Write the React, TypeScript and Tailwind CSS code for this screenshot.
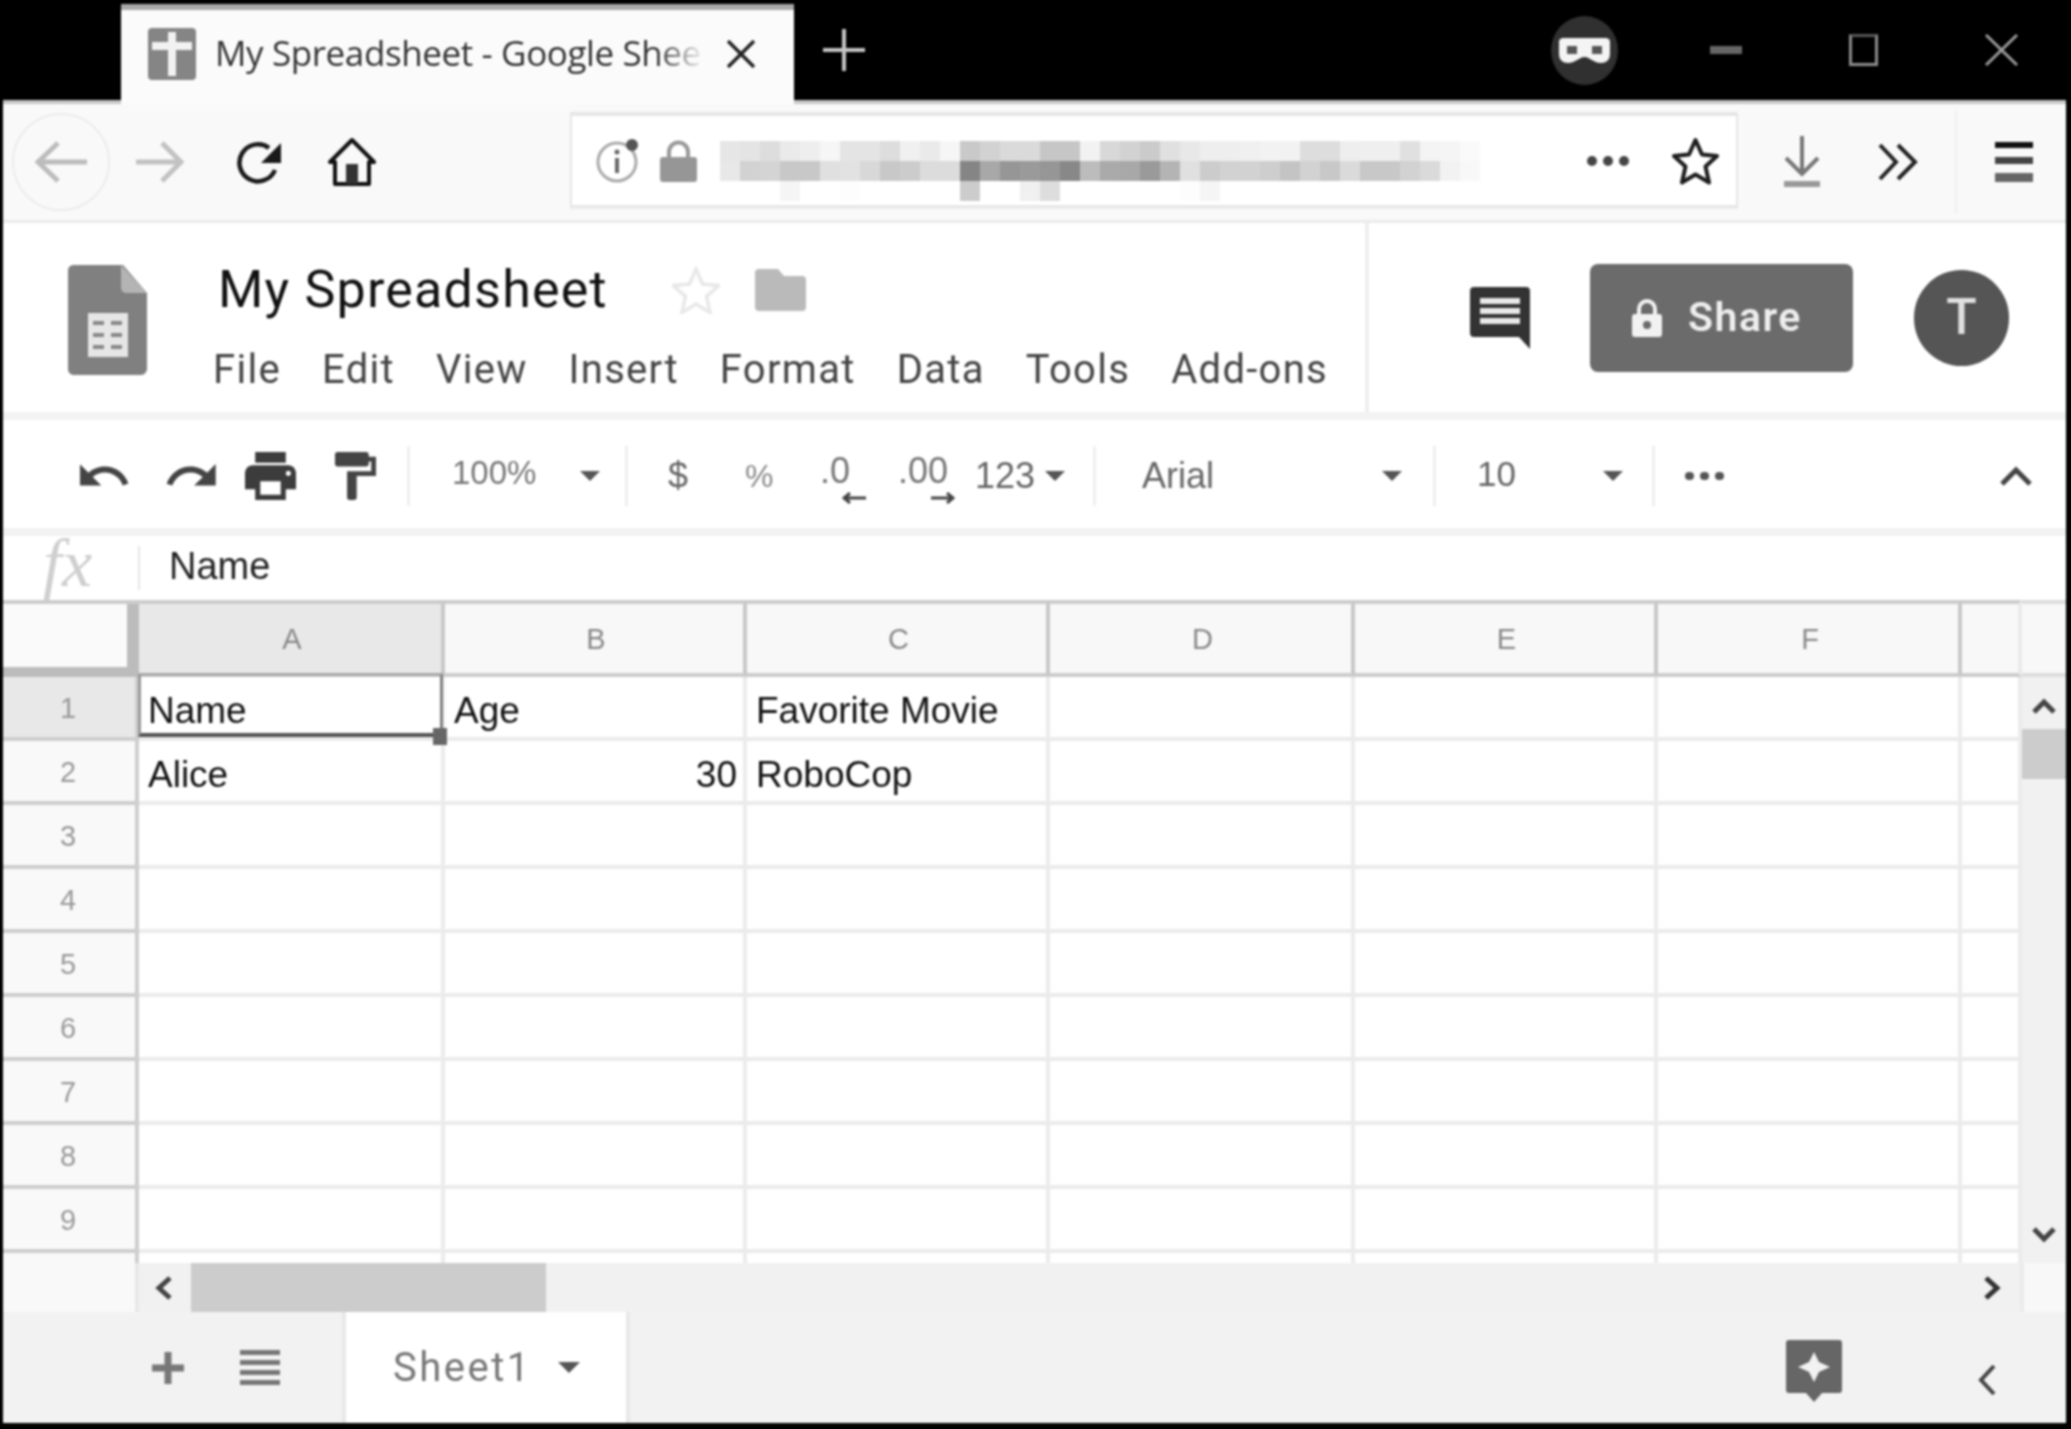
import React from 'react';

const ROW1 = ['e6','e4','dd','ea','ee','f6','e4','e4','dd','f0','ea','f6','c9','d2','da','da','c6','c6','f2','d8','d2','cb','e0','e8','ee','ee','f0','f2','f2','dd','dd','ee','ef','ef','e0','f4','f5','fa'];
const ROW2 = ['e8','d2','d4','c8','c8','e0','e2','d8','c8','cc','dc','dc','85','a8','96','9a','96','88','bc','aa','a8','9a','b4','e0','cc','d2','d2','ce','c4','d2','c8','da','c8','c8','d2','da','f2','f8'];
const ROW3 = ['ff','ff','ff','f5','ff','ff','fd','ff','ff','ff','ff','ff','cc','ff','ff','f0','dd','ff','ff','ff','ff','ff','ff','fd','f5','ff','ff','ff','ff','ff','ff','ff','ff','ff','ff','ff','ff','ff'];

const COLUMNS = ['A', 'B', 'C', 'D', 'E', 'F', ''];
const ROWS = [1, 2, 3, 4, 5, 6, 7, 8, 9, 10];
const CELLS: Record<string, string> = { A1: 'Name', B1: 'Age', C1: 'Favorite Movie', A2: 'Alice', B2: '30', C2: 'RoboCop' };
const MENU = ['File', 'Edit', 'View', 'Insert', 'Format', 'Data', 'Tools', 'Add-ons'];

function Tri({ className }: { className: string }) {
  return (
    <svg viewBox="0 0 20 10" className={className}>
      <path d="M0 0h20L10 10z" fill="#555" />
    </svg>
  );
}

function Sep({ className }: { className: string }) {
  return <div className={`w-[3px] h-[60px] shrink-0 bg-[#efefef] ${className}`} />;
}

function TitleBar() {
  return (
    <div className="flex items-center h-[104px] shrink-0 border-b-4 border-[#c6c6c6] bg-black">
      <div className="flex items-center ml-[118px] w-[673px] h-[100px] mt-[4px] -mb-[4px] self-start bg-[#fbfbfb] border-t-[6px] border-[#a8a8a8]">
        <svg viewBox="0 0 48 52" className="ml-[27px] w-[48px] h-[52px] mb-[6px] shrink-0">
          <rect width="48" height="52" rx="4" fill="#858585" />
          <path d="M20 4h8v10h16v8H28v26h-8V22H4v-8h16z" fill="#f2f2f2" />
        </svg>
        <div className="relative ml-[19px] w-[490px] h-[46px] -mt-[2px] mb-[6px]">
          <div className="whitespace-nowrap text-[35px] leading-[46px] tracking-[-0.4px] text-[#333] font-['Open_Sans',sans-serif]">My Spreadsheet - Google Shee</div>
          <div className="absolute top-0 right-0 w-[50px] h-full bg-gradient-to-r from-transparent to-[#fbfbfb]" />
        </div>
        <svg viewBox="0 0 28 28" className="ml-[22px] w-[28px] h-[28px] mb-[6px] shrink-0">
          <path d="M1 1l26 26M27 1L1 27" stroke="#222" strokeWidth="3.5" />
        </svg>
      </div>
      <svg viewBox="0 0 42 42" className="ml-[29px] w-[42px] h-[42px] shrink-0">
        <path d="M21 0v42M0 21h42" stroke="#c4c4c4" strokeWidth="4" />
      </svg>
      <svg viewBox="0 0 67 69" className="ml-[686px] w-[67px] h-[69px] shrink-0">
        <ellipse cx="33.500" cy="34.500" rx="33.500" ry="34.500" fill="#303030" />
        <path d="M8 26c0-3 2-4 5-4h41c3 0 5 1 5 4v12c0 6-4 9-9 9-8 0-11-6-16.500-6S25 47 17 47c-5 0-9-3-9-9z" fill="#f4f4f4" />
        <rect x="16" y="30" width="10" height="8" fill="#555" />
        <rect x="41" y="30" width="10" height="8" fill="#555" />
      </svg>
      <div className="ml-[92px] w-[32px] h-[8px] bg-[#666] shrink-0" />
      <div className="ml-[107px] w-[29px] h-[32px] border-[3px] border-[#8c8c8c] border-t-[#555] shrink-0" />
      <svg viewBox="0 0 33 32" className="ml-[107px] w-[33px] h-[32px] shrink-0">
        <path d="M1 1l31 30M32 1L1 31" stroke="#9a9a9a" strokeWidth="3" />
      </svg>
    </div>
  );
}

function NavBar() {
  return (
    <div className="flex items-center h-[119px] shrink-0 bg-[#f9f9f9] border-b-[3px] border-[#ebebeb]">
      <div className="flex items-center justify-center ml-[9px] w-[98px] h-[98px] rounded-full border-2 border-[#ececec] shrink-0">
        <svg viewBox="0 0 52 42" className="w-[52px] h-[42px]">
          <path d="M52 21H3M23 2L3 21l20 19" fill="none" stroke="#bcbcbc" strokeWidth="5" />
        </svg>
      </div>
      <svg viewBox="0 0 48 42" className="ml-[26px] w-[48px] h-[42px] shrink-0">
        <path d="M0 21h45M26 2l19 19-19 19" fill="none" stroke="#c2c2c2" strokeWidth="5" />
      </svg>
      <svg viewBox="0 0 48 44" className="ml-[51px] w-[48px] h-[44px] shrink-0">
        <path d="M40 30A18.500 18.500 0 1 1 34 8" fill="none" stroke="#1a1a1a" strokeWidth="4.500" />
        <path d="M46 3v20H26z" fill="#1a1a1a" />
      </svg>
      <svg viewBox="0 0 48 50" className="ml-[45px] w-[48px] h-[50px] shrink-0">
        <path d="M2 25L24 3l22 22h-5v22H7V25z" fill="none" stroke="#111" strokeWidth="4" strokeLinejoin="round" />
        <path d="M18 47V27h12v20z" fill="#333" />
      </svg>
      <div className="flex items-center ml-[194px] -mt-[5px] w-[1168px] h-[95px] bg-white border-2 border-[#e6e6e6] border-t-4 shadow-[0_2px_1px_#ececec] shrink-0">
        <div className="relative ml-[23px] w-[45px] h-[45px] shrink-0">
          <svg viewBox="0 0 45 45" className="w-full h-full">
            <circle cx="22" cy="24" r="19" fill="none" stroke="#aaa" strokeWidth="3" />
            <path d="M22 20v15" stroke="#666" strokeWidth="4" />
            <circle cx="22" cy="14" r="2.500" fill="#666" />
            <circle cx="37" cy="7" r="6" fill="#555" />
          </svg>
        </div>
        <svg viewBox="0 0 37 42" className="ml-[20px] w-[37px] h-[42px] shrink-0">
          <path d="M9 18v-6a9.500 9.500 0 0 1 19 0v6" fill="none" stroke="#999" strokeWidth="4" />
          <rect y="17" width="37" height="25" rx="3" fill="#969696" />
        </svg>
        <div className="flex flex-col ml-[23px] mt-[20px] w-[760px] shrink-0">
          {[ROW1, ROW2, ROW3].map((row, i) => (
            <div key={i} className="flex h-[20px]">
              {row.map((shade, j) => (
                <div key={j} className="w-[20px] h-[20px]" style={{ backgroundColor: `#${shade}${shade}${shade}` }} />
              ))}
            </div>
          ))}
        </div>
        <div className="flex gap-[6px] ml-[107px] shrink-0">
          <div className="w-[10px] h-[10px] rounded-full bg-[#444]" />
          <div className="w-[10px] h-[10px] rounded-full bg-[#444]" />
          <div className="w-[10px] h-[10px] rounded-full bg-[#444]" />
        </div>
        <svg viewBox="0 0 47 48" className="ml-[43px] w-[47px] h-[48px] shrink-0">
          <path d="M23.500 3l6.500 14.500 15 1.500-11.500 10.500 3.500 16-13.500-8-13.500 8 3.500-16L2 19l15-1.500z" fill="none" stroke="#1d1d1d" strokeWidth="4" strokeLinejoin="round" />
        </svg>
      </div>
      <svg viewBox="0 0 40 52" className="ml-[44px] w-[40px] h-[52px] shrink-0">
        <path d="M20 0v36M4 22l16 16 16-16" fill="none" stroke="#777" strokeWidth="4" />
        <rect x="2" y="45" width="36" height="6" fill="#999" />
      </svg>
      <svg viewBox="0 0 42 38" className="ml-[55px] w-[42px] h-[38px] shrink-0">
        <path d="M3 2l16 17L3 36M21 2l17 17-17 17" fill="none" stroke="#222" strokeWidth="4" />
      </svg>
      <div className="ml-[36px] w-[2px] h-[102px] bg-[#efefef] shrink-0" />
      <div className="flex flex-col gap-[9px] ml-[38px] w-[38px] shrink-0">
        <div className="h-[6px] bg-[#111]" />
        <div className="h-[7px] bg-[#444]" />
        <div className="h-[9px] bg-[#666]" />
      </div>
    </div>
  );
}

function DocHeader() {
  return (
    <div className="flex h-[197px] shrink-0 bg-white border-b-8 border-[#f3f3f3]">
      <div className="flex w-[1362px] shrink-0">
        <svg viewBox="0 0 79 110" className="ml-[65px] mt-[42px] w-[79px] h-[110px] shrink-0">
          <path d="M5 0h50l24 28v76a6 6 0 0 1-6 6H5a6 6 0 0 1-5-6V6a6 6 0 0 1 5-6z" fill="#808080" />
          <path d="M53 0l26 28H58a5 5 0 0 1-5-5z" fill="#b4b4b4" />
          <rect x="20" y="48" width="40" height="44" fill="#e6e6e6" />
          <path d="M25 56h11v4H25zm18 0h11v4H43zM25 68h11v4H25zm18 0h11v4H43zM25 80h11v4H25zm18 0h11v4H43z" fill="#888" />
        </svg>
        <div className="flex flex-col ml-[66px]">
          <div className="flex items-center mt-[37px] h-[60px]">
            <div className="ml-[5px] w-[454px] text-[52px] leading-[60px] tracking-[1.2px] text-[#111] whitespace-nowrap font-['Roboto',sans-serif]">My Spreadsheet</div>
            <svg viewBox="0 0 48 48" className="w-[48px] h-[48px] shrink-0">
              <path d="M24 3l6.500 15 16.500 1.500-12.500 11 3.500 16-14-8.500-14 8.500 3.500-16L1 19.500 17.500 18z" fill="none" stroke="#e8e8e8" strokeWidth="3.500" />
            </svg>
            <svg viewBox="0 0 51 42" className="ml-[35px] w-[51px] h-[42px] shrink-0">
              <path d="M4 0h19l6 7h18a4 4 0 0 1 4 4v27a4 4 0 0 1-4 4H4a4 4 0 0 1-4-4V4a4 4 0 0 1 4-4z" fill="#bababa" />
            </svg>
          </div>
          <div className="flex items-center gap-[41px] mt-[25px] h-[50px] text-[40px] leading-[50px] tracking-[1.3px] text-[#444] whitespace-nowrap font-['Roboto',sans-serif]">
            {MENU.map((item) => (
              <span key={item}>{item}</span>
            ))}
          </div>
        </div>
      </div>
      <div className="flex items-center flex-1 border-l-4 border-[#efefef]">
        <svg viewBox="0 0 60 62" className="ml-[101px] w-[60px] h-[62px] shrink-0">
          <path d="M0 4a4 4 0 0 1 4-4h52a4 4 0 0 1 4 4v58L49 50H4a4 4 0 0 1-4-4z" fill="#333" />
          <path d="M10 11h40v6H10zm0 10h40v6H10zm0 10h40v6H10z" fill="#e8e8e8" />
        </svg>
        <div className="flex items-center ml-[60px] w-[263px] h-[108px] rounded-lg bg-[#6b6b6b] shrink-0">
          <svg viewBox="0 0 30 38" className="ml-[42px] w-[30px] h-[38px] shrink-0">
            <path d="M7 16v-6a8 8 0 0 1 16 0v6" fill="none" stroke="#f2f2f2" strokeWidth="4" />
            <rect y="15" width="30" height="23" rx="3" fill="#f2f2f2" />
            <circle cx="15" cy="26" r="4" fill="#6b6b6b" />
          </svg>
          <span className="ml-[26px] text-[41px] leading-none font-semibold tracking-[1.5px] text-[#eee] font-['Roboto',sans-serif]">Share</span>
        </div>
        <div className="flex items-center justify-center ml-[61px] w-[95px] h-[96px] rounded-full bg-[#555] text-[50px] font-medium text-[#e0e0e0] shrink-0 font-['Roboto',sans-serif]">T</div>
      </div>
    </div>
  );
}

function FormatBar() {
  return (
    <div className="flex items-center h-[116px] pt-[3px] shrink-0 bg-white border-b-8 border-[#f2f2f2] whitespace-nowrap text-[#666] font-['Liberation_Sans',sans-serif]">
      <svg viewBox="2 7 22 10" className="ml-[77px] w-[52px] h-[24px] shrink-0">
        <path d="M12.500 8c-2.650 0-5.050.99-6.900 2.600L2 7v9h9l-3.620-3.620c1.390-1.160 3.160-1.880 5.120-1.880 3.540 0 6.550 2.310 7.600 5.500l2.370-.78C21.080 11.030 17.150 8 12.500 8z" fill="#444" />
      </svg>
      <svg viewBox="1 7 21 10" className="ml-[33px] w-[51px] h-[24px] shrink-0">
        <path d="M18.400 10.600C16.550 8.990 14.150 8 11.500 8c-4.650 0-8.580 3.030-9.960 7.220L3.900 16c1.050-3.190 4.050-5.500 7.600-5.500 1.950 0 3.730.72 5.120 1.880L13 16h9V7l-3.600 3.600z" fill="#444" />
      </svg>
      <svg viewBox="2 3 20 18" className="ml-[29px] w-[51px] h-[48px] shrink-0" preserveAspectRatio="none">
        <path d="M19 8H5c-1.660 0-3 1.340-3 3v6h4v4h12v-4h4v-6c0-1.660-1.340-3-3-3zm-3 11H8v-5h8v5zm3-7c-.55 0-1-.45-1-1s.45-1 1-1 1 .45 1 1-.45 1-1 1zm-1-9H6v4h12V3z" fill="#3c3c3c" />
      </svg>
      <svg viewBox="4 2 17 20" className="ml-[39px] w-[41px] h-[48px] shrink-0" preserveAspectRatio="none">
        <path d="M18 4V3c0-.55-.45-1-1-1H5c-.55 0-1 .45-1 1v4c0 .55.45 1 1 1h12c.55 0 1-.45 1-1V6h1v4H9v11c0 .55.45 1 1 1h2c.55 0 1-.45 1-1v-9h8V4h-3z" fill="#444" />
      </svg>
      <Sep className="ml-[31px]" />
      <span className="ml-[42px] w-[86px] text-[33px] text-[#777] -mt-[6px] shrink-0">100%</span>
      <Tri className="ml-[42px] w-[20px] h-[10px] shrink-0" />
      <Sep className="ml-[25px]" />
      <span className="ml-[40px] w-[24px] text-[36px] leading-none shrink-0">$</span>
      <span className="ml-[53px] w-[33px] text-[32px] leading-none shrink-0 text-[#888]">%</span>
      <div className="relative ml-[42px] w-[46px] h-[60px] shrink-0">
        <span className="absolute left-0 top-[7px] text-[36px] leading-none text-[#777]">.0</span>
        <svg viewBox="0 0 24 12" className="absolute right-0 bottom-[2px] w-[24px] h-[12px]">
          <path d="M24 6H2M8 1L2 6l6 5" fill="none" stroke="#444" strokeWidth="3" />
        </svg>
      </div>
      <div className="relative ml-[32px] w-[57px] h-[60px] shrink-0">
        <span className="absolute left-0 top-[7px] text-[36px] leading-none text-[#777]">.00</span>
        <svg viewBox="0 0 24 12" className="absolute right-0 bottom-[2px] w-[24px] h-[12px]">
          <path d="M0 6h22M16 1l6 5-6 5" fill="none" stroke="#444" strokeWidth="3" />
        </svg>
      </div>
      <span className="ml-[20px] w-[60px] text-[36px] leading-none shrink-0">123</span>
      <Tri className="ml-[9px] w-[22px] h-[10px] shrink-0" />
      <Sep className="ml-[27px]" />
      <span className="ml-[46px] w-[73px] text-[36px] leading-none shrink-0">Arial</span>
      <Tri className="ml-[167px] w-[20px] h-[10px] shrink-0" />
      <Sep className="ml-[31px]" />
      <span className="ml-[41px] w-[40px] text-[35px] leading-none -mt-[4px] shrink-0">10</span>
      <Tri className="ml-[86px] w-[20px] h-[10px] shrink-0" />
      <Sep className="ml-[29px]" />
      <div className="flex gap-[6px] ml-[30px] w-[40px] shrink-0">
        <div className="w-[9px] h-[8px] rounded-full bg-[#555]" />
        <div className="w-[9px] h-[8px] rounded-full bg-[#555]" />
        <div className="w-[9px] h-[8px] rounded-full bg-[#555]" />
      </div>
      <svg viewBox="0 0 32 20" className="ml-[275px] w-[32px] h-[20px] shrink-0">
        <path d="M2 18L16 4l14 14" fill="none" stroke="#444" strokeWidth="5" />
      </svg>
    </div>
  );
}

function FormulaBar() {
  return (
    <div className="flex items-center h-[64px] shrink-0 bg-white">
      <span className="ml-[40px] w-[95px] text-[68px] leading-none -mt-[10px] italic text-[#cfcfcf] font-['Liberation_Serif',serif]">fx</span>
      <div className="w-[2px] h-[44px] bg-[#e6e6e6]" />
      <span className="ml-[29px] -mt-[4px] text-[38px] leading-none text-[#222] font-['Liberation_Sans',sans-serif]">Name</span>
    </div>
  );
}

function Sheet() {
  return (
    <div className="flex h-[663px] shrink-0 overflow-hidden bg-white font-['Liberation_Sans',sans-serif]">
      <div className="relative w-[2019px] shrink-0">
        <div className="grid grid-cols-[136px_306px_302px_303px_305px_303px_304px_60px] grid-rows-[77px] auto-rows-[64px]">
          <div className="bg-[#f8f8f8] border-t-4 border-[#ccc]">
            <div className="h-full border-r-[12px] border-b-[10px] border-[#bcbcbc] bg-[#fafafa]" />
          </div>
          {COLUMNS.map((col, i) => (
            <div
              key={i}
              className={`flex items-center justify-center pl-[4px] pt-[2px] border-y-4 border-r-4 border-y-[#ccc] text-[29px] text-[#888] ${
                col === 'A' ? 'bg-[#e8e8e8] border-r-[#c8c8c8]' : col === '' ? 'bg-[#f8f8f8] border-r-[#eaeaea]' : 'bg-[#f8f8f8] border-r-[#c8c8c8]'
              }`}
            >
              {col}
            </div>
          ))}
          {ROWS.map((row) => (
            <React.Fragment key={row}>
              <div className={`flex items-center justify-center pt-[3px] pr-[2px] border-b-4 border-r-4 border-[#cecece] text-[29px] text-[#999] ${row === 1 ? 'bg-[#e8e8e8]' : 'bg-[#f9f9f9]'}`}>{row < 10 ? row : ''}</div>
              {COLUMNS.map((col, i) => (
                <div
                  key={i}
                  className={`flex items-center pt-[6px] border-b-4 border-r-4 border-[#ebebeb] text-[37px] leading-none text-[#111] whitespace-nowrap pl-[9px] pr-[6px] ${
                    col === 'B' && row === 2 ? 'justify-end' : ''
                  }`}
                >
                  {CELLS[`${col}${row}`]}
                </div>
              ))}
            </React.Fragment>
          ))}
        </div>
        <div className="absolute left-[135px] top-[73px] w-[305px] h-[64px] border-[3px] border-t-[#aaa] border-l-[#999] border-r-[#808080] border-b-4 border-b-[#555]" />
        <div className="absolute left-[430px] top-[128px] w-[14px] h-[17px] bg-[#666]" />
      </div>
      <div className="flex flex-col items-center w-[44px] shrink-0 bg-[#f1f1f1] relative">
        <div className="w-full h-[77px] bg-[#f8f8f8] border-y-4 border-y-[#ddd]" />
        <svg viewBox="0 0 24 18" className="mt-[20px] w-[24px] h-[18px] shrink-0">
          <path d="M2 15L12 5l10 10" fill="none" stroke="#444" strokeWidth="5" />
        </svg>
        <div className="mt-[14px] w-full h-[50px] bg-[#cccccc] shrink-0" />
        <svg viewBox="0 0 24 18" className="mt-[447px] w-[24px] h-[18px] shrink-0">
          <path d="M2 3l10 10L22 3" fill="none" stroke="#444" strokeWidth="5" />
        </svg>
      </div>
    </div>
  );
}

function HScroll() {
  return (
    <div className="flex h-[49px] shrink-0 bg-[#f1f1f1]">
      <div className="w-[136px] bg-[#f9f9f9] border-r-4 border-[#e8e8e8] shrink-0" />
      <div className="flex items-center w-[52px] shrink-0">
        <svg viewBox="0 0 18 24" className="ml-[16px] w-[18px] h-[24px]">
          <path d="M15 2L4 12l11 10" fill="none" stroke="#444" strokeWidth="5" />
        </svg>
      </div>
      <div className="w-[355px] bg-[#cccccc] shrink-0" />
      <div className="flex items-center flex-1">
        <svg viewBox="0 0 18 24" className="ml-[1437px] w-[18px] h-[24px]">
          <path d="M3 2l11 10L3 22" fill="none" stroke="#333" strokeWidth="5" />
        </svg>
      </div>
      <div className="w-[46px] bg-[#f8f8f8] border-l-4 border-[#ebebeb] shrink-0" />
    </div>
  );
}

function TabBar() {
  return (
    <div className="flex items-center flex-1 bg-[#f2f2f2]">
      <svg viewBox="0 0 32 32" className="ml-[149px] w-[32px] h-[32px] shrink-0">
        <path d="M16 0v32M0 16h32" stroke="#777" strokeWidth="7" />
      </svg>
      <div className="flex flex-col justify-between ml-[56px] w-[40px] h-[36px] shrink-0">
        <div className="h-[5px] bg-[#777]" />
        <div className="h-[5px] bg-[#777]" />
        <div className="h-[5px] bg-[#777]" />
        <div className="h-[5px] bg-[#777]" />
      </div>
      <div className="flex items-center self-stretch ml-[62px] w-[288px] bg-white border-x-4 border-[#e8e8e8] shrink-0">
        <span className="ml-[47px] text-[40px] leading-none tracking-[2.5px] text-[#777] font-['Roboto',sans-serif]">Sheet1</span>
        <Tri className="ml-[26px] w-[22px] h-[11px] shrink-0" />
      </div>
      <svg viewBox="0 0 56 62" className="ml-[1156px] mt-[6px] w-[56px] h-[62px] shrink-0">
        <path d="M3 0h50a3 3 0 0 1 3 3v47a3 3 0 0 1-3 3H36l-8 9-8-9H3a3 3 0 0 1-3-3V3a3 3 0 0 1 3-3z" fill="#666" />
        <path d="M28 12l5 10 11 5-11 5-5 10-5-10-11-5 11-5z" fill="#f2f2f2" />
      </svg>
      <svg viewBox="0 0 20 32" className="ml-[135px] mt-[24px] w-[20px] h-[32px] shrink-0">
        <path d="M17 2L4 16l13 14" fill="none" stroke="#444" strokeWidth="4" />
      </svg>
    </div>
  );
}

export default function App() {
  return (
    <div className="w-[2071px] h-[1429px] bg-black overflow-hidden pl-[3px] pr-[5px] pb-[6px]">
      <div className="flex flex-col h-full w-full blur-[1px]">
        <TitleBar />
        <NavBar />
        <DocHeader />
        <FormatBar />
        <FormulaBar />
        <Sheet />
        <HScroll />
        <TabBar />
      </div>
    </div>
  );
}
